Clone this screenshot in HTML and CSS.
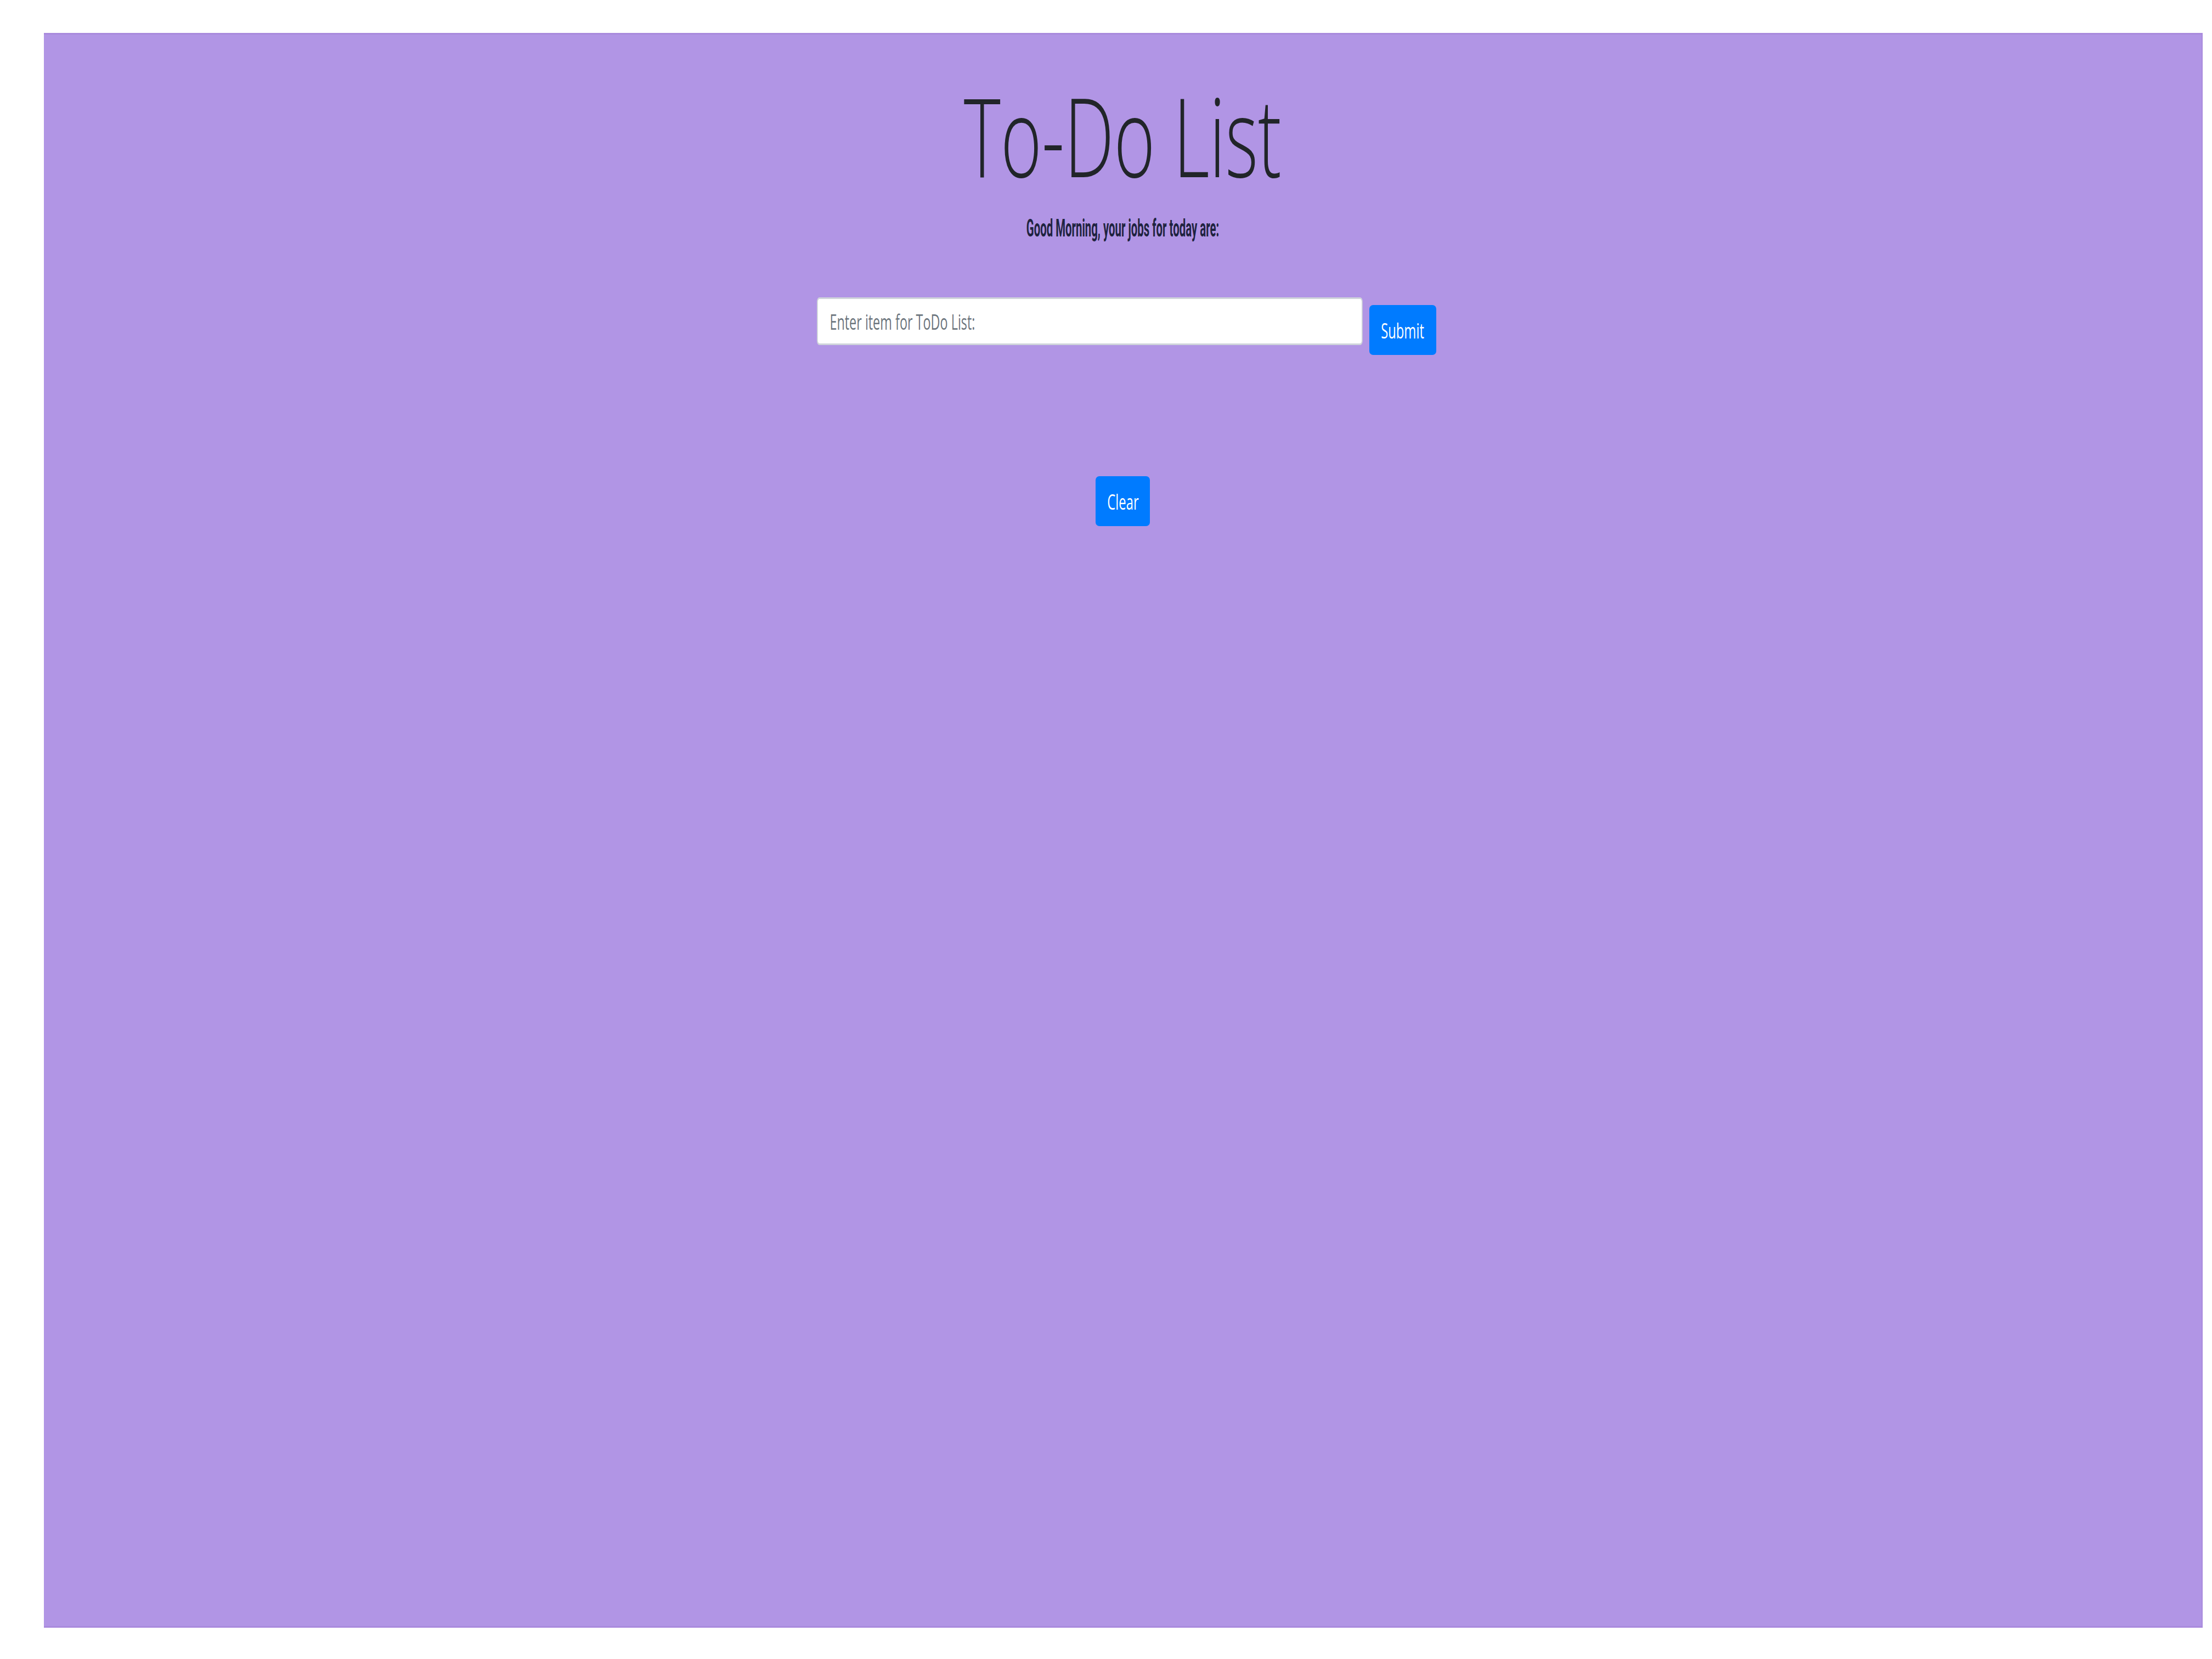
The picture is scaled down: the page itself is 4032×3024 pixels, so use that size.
FILE: index.html
```html
<!DOCTYPE html>
<html lang="en">
<head>
<meta charset="utf-8">
<title>To-Do List</title>
<link rel="stylesheet" href="styles.css">
</head>
<body>
  <main class="board">
    <h1 class="title"><span class="squeeze title-text">To-Do List</span></h1>
    <p class="greeting"><span class="squeeze greeting-text">Good Morning, your jobs for today are:</span></p>
    <form class="entry" onsubmit="return false;">
      <div class="field">
        <input class="field-input" type="text" placeholder="Enter item for ToDo List:">
      </div>
      <button class="btn btn-submit" type="submit"><span class="squeeze btn-text">Submit</span></button>
    </form>
    <ul class="items"></ul>
    <div class="actions">
      <button class="btn btn-clear" type="button"><span class="squeeze btn-text">Clear</span></button>
    </div>
  </main>
</body>
</html>
```
FILE: styles.css
```css
html, body {
  margin: 0;
  padding: 0;
  background: #ffffff;
}

body {
  padding-top: 60px;
  font-family: "Open Sans", "Liberation Sans", sans-serif;
  color: #212529;
}

.board {
  box-sizing: border-box;
  margin-left: 80px;
  width: 3935px;
  height: 2907px;
  background: #b195e5;
  border-top: 3px solid #a98add;
  border-right: 2px solid #a98add;
  border-bottom: 3px solid #a98add;
  display: flex;
  flex-direction: column;
  align-items: stretch;
}

.squeeze {
  display: inline-block;
  transform-origin: 50% 50%;
  white-space: nowrap;
}

.title {
  margin: 63px 0 0 0;
  text-align: center;
  font-family: "Open Sans", "Liberation Sans", sans-serif;
  font-weight: 300;
  font-size: 200px;
  line-height: 240px;
  height: 240px;
  color: #212529;
}

.title-text {
  transform: scaleX(0.64);
}

.greeting {
  margin: 24px 0 0 0;
  text-align: center;
  font-family: Roboto, "Liberation Sans", sans-serif;
  font-weight: 700;
  font-size: 44px;
  line-height: 52px;
  height: 52px;
  color: #1f2340;
}

.greeting-text {
  transform: scaleX(0.463);
}

.entry {
  margin: 100px 0 0 0;
  padding-left: 14px;
  display: flex;
  justify-content: center;
  align-items: flex-start;
  gap: 12px;
}

.field {
  width: 995px;
  height: 87px;
  overflow: visible;
}

.field-input {
  box-sizing: border-box;
  width: 1658px;
  height: 87px;
  margin: 0;
  padding: 0 0 0 36px;
  border: 3px solid #cfd4da;
  border-radius: 8px;
  background: #ffffff;
  font-family: "Open Sans", "Liberation Sans", sans-serif;
  font-size: 39px;
  color: #495057;
  transform: scaleX(0.6);
  transform-origin: 0 0;
  outline: none;
}

.field-input::placeholder {
  color: #6c757d;
  opacity: 1;
}

.btn {
  box-sizing: border-box;
  display: flex;
  align-items: center;
  justify-content: center;
  padding: 0;
  margin: 0;
  border: none;
  border-radius: 7px;
  background: #007bff;
  color: #ffffff;
  font-family: "Open Sans", "Liberation Sans", sans-serif;
  font-size: 39px;
  line-height: 1;
  cursor: pointer;
}

.btn-text {
  transform: scaleX(0.61);
}

.btn-submit {
  width: 122px;
  height: 91px;
  margin-top: 14px;
}

.items {
  list-style: none;
  margin: 0;
  padding: 0;
}

.actions {
  margin-top: 221px;
  display: flex;
  justify-content: center;
}

.btn-clear {
  width: 99px;
  height: 91px;
}
```
